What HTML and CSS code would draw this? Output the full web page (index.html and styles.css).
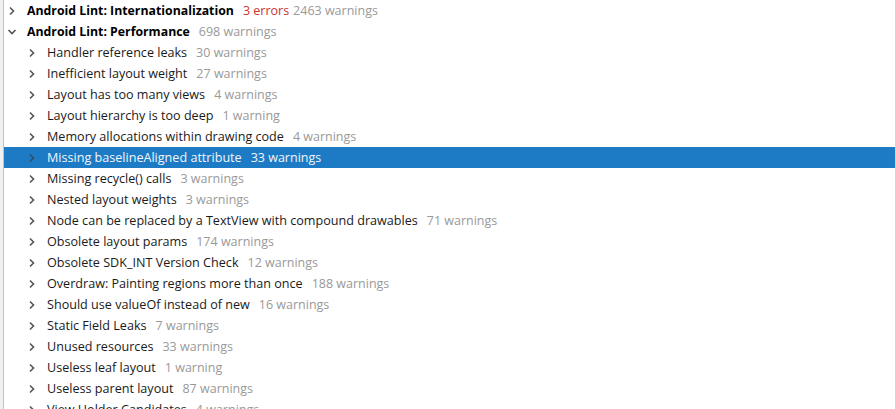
FILE: index.html
```html
<!DOCTYPE html>
<html>
<head>
<meta charset="utf-8">
<link rel="stylesheet" href="styles.css">
</head>
<body>
<div class="pane">
  <div class="edge"></div>
  <ul class="tree">
    <li class="row top"><span class="chev right"><svg viewBox="0 0 10 10"><path d="M3 1.5 L6.5 5 L3 8.5"/></svg></span><span class="name">Android Lint: Internationalization</span><span class="err">3 errors</span><span class="cnt">2463 warnings</span></li>
    <li class="row top"><span class="chev down"><svg viewBox="0 0 10 10"><path d="M1.5 3 L5 6.5 L8.5 3"/></svg></span><span class="name">Android Lint: Performance</span><span class="cnt">698 warnings</span></li>
    <li class="row child"><span class="chev right"><svg viewBox="0 0 10 10"><path d="M3 1.5 L6.5 5 L3 8.5"/></svg></span><span class="name">Handler reference leaks</span><span class="cnt">30 warnings</span></li>
    <li class="row child"><span class="chev right"><svg viewBox="0 0 10 10"><path d="M3 1.5 L6.5 5 L3 8.5"/></svg></span><span class="name">Inefficient layout weight</span><span class="cnt">27 warnings</span></li>
    <li class="row child"><span class="chev right"><svg viewBox="0 0 10 10"><path d="M3 1.5 L6.5 5 L3 8.5"/></svg></span><span class="name">Layout has too many views</span><span class="cnt">4 warnings</span></li>
    <li class="row child"><span class="chev right"><svg viewBox="0 0 10 10"><path d="M3 1.5 L6.5 5 L3 8.5"/></svg></span><span class="name">Layout hierarchy is too deep</span><span class="cnt">1 warning</span></li>
    <li class="row child"><span class="chev right"><svg viewBox="0 0 10 10"><path d="M3 1.5 L6.5 5 L3 8.5"/></svg></span><span class="name">Memory allocations within drawing code</span><span class="cnt">4 warnings</span></li>
    <li class="row child selected"><span class="chev right"><svg viewBox="0 0 10 10"><path d="M3 1.5 L6.5 5 L3 8.5"/></svg></span><span class="name">Missing baselineAligned attribute</span><span class="cnt">33 warnings</span></li>
    <li class="row child"><span class="chev right"><svg viewBox="0 0 10 10"><path d="M3 1.5 L6.5 5 L3 8.5"/></svg></span><span class="name">Missing recycle() calls</span><span class="cnt">3 warnings</span></li>
    <li class="row child"><span class="chev right"><svg viewBox="0 0 10 10"><path d="M3 1.5 L6.5 5 L3 8.5"/></svg></span><span class="name">Nested layout weights</span><span class="cnt">3 warnings</span></li>
    <li class="row child"><span class="chev right"><svg viewBox="0 0 10 10"><path d="M3 1.5 L6.5 5 L3 8.5"/></svg></span><span class="name">Node can be replaced by a TextView with compound drawables</span><span class="cnt">71 warnings</span></li>
    <li class="row child"><span class="chev right"><svg viewBox="0 0 10 10"><path d="M3 1.5 L6.5 5 L3 8.5"/></svg></span><span class="name">Obsolete layout params</span><span class="cnt">174 warnings</span></li>
    <li class="row child"><span class="chev right"><svg viewBox="0 0 10 10"><path d="M3 1.5 L6.5 5 L3 8.5"/></svg></span><span class="name">Obsolete SDK_INT Version Check</span><span class="cnt">12 warnings</span></li>
    <li class="row child"><span class="chev right"><svg viewBox="0 0 10 10"><path d="M3 1.5 L6.5 5 L3 8.5"/></svg></span><span class="name">Overdraw: Painting regions more than once</span><span class="cnt">188 warnings</span></li>
    <li class="row child"><span class="chev right"><svg viewBox="0 0 10 10"><path d="M3 1.5 L6.5 5 L3 8.5"/></svg></span><span class="name">Should use valueOf instead of new</span><span class="cnt">16 warnings</span></li>
    <li class="row child"><span class="chev right"><svg viewBox="0 0 10 10"><path d="M3 1.5 L6.5 5 L3 8.5"/></svg></span><span class="name">Static Field Leaks</span><span class="cnt">7 warnings</span></li>
    <li class="row child"><span class="chev right"><svg viewBox="0 0 10 10"><path d="M3 1.5 L6.5 5 L3 8.5"/></svg></span><span class="name">Unused resources</span><span class="cnt">33 warnings</span></li>
    <li class="row child"><span class="chev right"><svg viewBox="0 0 10 10"><path d="M3 1.5 L6.5 5 L3 8.5"/></svg></span><span class="name">Useless leaf layout</span><span class="cnt">1 warning</span></li>
    <li class="row child"><span class="chev right"><svg viewBox="0 0 10 10"><path d="M3 1.5 L6.5 5 L3 8.5"/></svg></span><span class="name">Useless parent layout</span><span class="cnt">87 warnings</span></li>
    <li class="row child"><span class="chev right"><svg viewBox="0 0 10 10"><path d="M3 1.5 L6.5 5 L3 8.5"/></svg></span><span class="name">View Holder Candidates</span><span class="cnt">4 warnings</span></li>
  </ul>
</div>
</body>
</html>
```
FILE: styles.css
```css
html, body {
  margin: 0;
  padding: 0;
  background: #ffffff;
  overflow: hidden;
}
.pane {
  display: flex;
  width: 895px;
  height: 409px;
  overflow: hidden;
  font-family: "Open Sans", "Noto Sans", sans-serif;
  font-size: 12.5px;
  color: #1a1a1a;
}
.edge {
  flex: 0 0 3px;
  background: #f0f0f0;
  border-right: 1px solid #c4c4c4;
}
.tree {
  flex: 1;
  list-style: none;
  margin: 0;
  padding: 0;
}
.row {
  display: flex;
  align-items: center;
  height: 21px;
  white-space: nowrap;
}
.row.top { padding-left: 3px; }
.row.child { padding-left: 23px; }
.chev {
  width: 10px;
  height: 10px;
  margin-right: 10px;
  display: flex;
}
.chev svg {
  width: 10px;
  height: 10px;
  fill: none;
  stroke: #555;
  stroke-width: 1.6;
}
.top .name { font-weight: 700; color: #000; font-size: 12.3px; }
.name { margin-right: 9px; }
.child .name { font-size: 12.6px; }
.err { color: #cc3333; margin-right: 4px; }
.cnt { color: #999999; }
.selected {
  background: #1c7bc4;
}
.selected .name, .selected .cnt { color: #f2f6fb; }
.selected .chev svg { stroke: #2d4f6c; }
```
